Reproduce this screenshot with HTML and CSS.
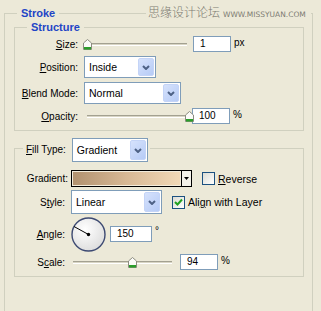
FILE: index.html
```html
<!DOCTYPE html>
<html lang="en">
<head>
    <meta charset="UTF-8">
    <title>Stroke</title>
    <link rel="stylesheet" href="styles.css">
</head>
<body>
    <div class="watermark"><span class="wm-cn">思缘设计论坛</span><span class="wm-en">WWW.MISSYUAN.COM</span></div>

    <fieldset class="group stroke">
        <legend>Stroke</legend>

        <fieldset class="group structure">
            <legend>Structure</legend>
            <div class="form structure-form">
                <label><u>S</u>ize:</label>
                <div class="line">
                    <div class="slider size-slider">
                        <div class="track"></div>
                        <svg class="thumb" style="left:0%" width="9" height="11" viewBox="0 0 9 11"><path d="M0.5 4 L4.5 0.5 L8.5 4 V10.5 H0.5 Z" fill="#fbfbf8" stroke="#8c8c80"/><rect x="1" y="8" width="7" height="2.5" fill="#2a9d2a"/></svg>
                    </div>
                    <div class="field size-field">1</div>
                    <span class="unit">px</span>
                </div>

                <label><u>P</u>osition:</label>
                <div class="line">
                    <div class="select position-select"><span>Inside</span><i class="drop"><svg width="8" height="5" viewBox="0 0 8 5"><path d="M1 1 L4 4 L7 1" fill="none" stroke="#4d6185" stroke-width="2"/></svg></i></div>
                </div>

                <label><u>B</u>lend Mode:</label>
                <div class="line">
                    <div class="select blend-select"><span>Normal</span><i class="drop"><svg width="8" height="5" viewBox="0 0 8 5"><path d="M1 1 L4 4 L7 1" fill="none" stroke="#4d6185" stroke-width="2"/></svg></i></div>
                </div>

                <label><u>O</u>pacity:</label>
                <div class="line">
                    <div class="slider opacity-slider">
                        <div class="track"></div>
                        <svg class="thumb" style="left:100%" width="9" height="11" viewBox="0 0 9 11"><path d="M0.5 4 L4.5 0.5 L8.5 4 V10.5 H0.5 Z" fill="#fbfbf8" stroke="#8c8c80"/><rect x="1" y="8" width="7" height="2.5" fill="#2a9d2a"/></svg>
                    </div>
                    <div class="field opacity-field">100</div>
                    <span class="unit">%</span>
                </div>
            </div>
        </fieldset>

        <fieldset class="group fill">
            <legend>
                <label><u>F</u>ill Type:</label>
                <div class="select filltype-select"><span>Gradient</span><i class="drop"><svg width="8" height="5" viewBox="0 0 8 5"><path d="M1 1 L4 4 L7 1" fill="none" stroke="#4d6185" stroke-width="2"/></svg></i></div>
            </legend>
            <div class="form fill-form">
                <label class="gradient-label">Gradient:</label>
                <div class="line">
                    <div class="gradient-picker">
                        <div class="gradient-swatch"></div>
                        <div class="gradient-arrow"><svg width="5" height="3" viewBox="0 0 5 3"><path d="M0 0 H5 L2.5 3 Z" fill="#000"/></svg></div>
                    </div>
                    <span class="check"></span>
                    <span class="check-text"><u>R</u>everse</span>
                </div>

                <label>S<u>t</u>yle:</label>
                <div class="line">
                    <div class="select style-select"><span>Linear</span><i class="drop"><svg width="8" height="5" viewBox="0 0 8 5"><path d="M1 1 L4 4 L7 1" fill="none" stroke="#4d6185" stroke-width="2"/></svg></i></div>
                    <span class="check checked"><svg width="11" height="11" viewBox="0 0 11 11"><path d="M2 5 L4.5 7.5 L9 2.5" fill="none" stroke="#21a121" stroke-width="2"/></svg></span>
                    <span class="check-text">Ali<u>g</u>n with Layer</span>
                </div>

                <label><u>A</u>ngle:</label>
                <div class="line">
                    <svg class="dial" width="35" height="35" viewBox="0 0 35 35">
                        <defs>
                            <radialGradient id="dialFill" cx="0.4" cy="0.35" r="0.7">
                                <stop offset="0" stop-color="#ffffff"/>
                                <stop offset="1" stop-color="#dcdcdc"/>
                            </radialGradient>
                        </defs>
                        <circle cx="17.5" cy="17.5" r="16.5" fill="url(#dialFill)" stroke="#3d4a72" stroke-width="1.4"/>
                        <line x1="17.5" y1="17.5" x2="3" y2="9.5" stroke="#000" stroke-width="1"/>
                        <circle cx="17.5" cy="17.5" r="1.7" fill="#000"/>
                    </svg>
                    <div class="field angle-field">150</div>
                    <span class="unit degree">°</span>
                </div>

                <label>S<u>c</u>ale:</label>
                <div class="line">
                    <div class="slider scale-slider">
                        <div class="track"></div>
                        <svg class="thumb" style="left:60%" width="9" height="11" viewBox="0 0 9 11"><path d="M0.5 4 L4.5 0.5 L8.5 4 V10.5 H0.5 Z" fill="#fbfbf8" stroke="#8c8c80"/><rect x="1" y="8" width="7" height="2.5" fill="#2a9d2a"/></svg>
                    </div>
                    <div class="field scale-field">94</div>
                    <span class="unit">%</span>
                </div>
            </div>
        </fieldset>
    </fieldset>
</body>
</html>
```

FILE: styles.css
```css
body {
    margin: 0;
    width: 321px;
    height: 311px;
    overflow: hidden;
    position: relative;
    background-color: #ece9d8;
    font-family: "Liberation Sans", Arial, sans-serif;
    font-size: 10px;
    color: #000;
}

/* group boxes */
.group {
    margin: 0;
    padding: 0;
    min-width: 0;
    border: 1px solid #d0d0bf;
}

.group > legend {
    font-weight: bold;
    font-size: 11px;
    line-height: 14px;
    color: #1f45c6;
    padding: 0 4px;
}

.stroke {
    margin: 6px 0 0 4px;
    width: 309px;
    height: 340px;
    box-sizing: border-box;
    padding: 0 8px 0 9px;
}

.stroke > legend {
    margin-left: 3px;
}

.structure > legend {
    margin-left: 12px;
}

.fill {
    margin-top: 7px;
}

/* legend box is shorter than the list inside it so the frame line sits a bit higher */
.fill > legend {
    display: flex;
    align-items: flex-start;
    gap: 6px;
    height: 20px;
    margin-left: 8px;
    padding: 0 2px 0 3px;
    font-weight: normal;
    font-size: 10px;
    color: #000;
}

.fill > legend label {
    line-height: 23px;
}

/* label / control grid */
.form {
    display: grid;
    align-items: center;
}

.form label {
    text-align: right;
    white-space: nowrap;
}

.structure-form {
    grid-template-columns: 63px 1fr;
    grid-template-rows: 16px 22px 22px 16px;
    column-gap: 6px;
    row-gap: 4px;
    padding: 2px 0 6px;
}

.fill-form {
    grid-template-columns: 50px 1fr;
    grid-template-rows: 17px 24px 34px 16px;
    column-gap: 6px;
    row-gap: 3px;
    padding: 12px 0 6px;
}

.gradient-label {
    margin-right: -3px;
}

.line {
    display: flex;
    align-items: center;
    height: 100%;
}

/* sliders */
.slider {
    position: relative;
    height: 11px;
}

.slider .track {
    margin-top: 4px;
    height: 1px;
    background-color: #d8d5c4;
    border-top: 1px solid #a3a191;
    border-bottom: 1px solid #fff;
}

.slider .thumb {
    position: absolute;
    top: 0;
    margin-left: -4px;
}

.size-slider {
    width: 100px;
    margin-left: 3px;
}

.opacity-slider {
    width: 102px;
    margin-left: 3px;
}

.scale-slider {
    width: 99px;
    margin-left: 2px;
}

/* text fields */
.field {
    height: 16px;
    box-sizing: border-box;
    border: 1px solid #7f9db9;
    background-color: #fff;
    padding-left: 6px;
    line-height: 14px;
}

.size-field {
    width: 38px;
    margin-left: 6px;
}

.opacity-field {
    width: 38px;
    margin-left: 3px;
}

.angle-field {
    width: 42px;
    margin-left: 4px;
}

.scale-field {
    width: 38px;
    margin-left: 8px;
}

.unit {
    align-self: flex-start;
    margin-top: 1px;
    margin-left: 3px;
}

.degree {
    margin-top: 8px;
}

/* drop-down lists */
.select {
    display: flex;
    align-items: stretch;
    height: 22px;
    box-sizing: border-box;
    border: 1px solid #7f9db9;
    background-color: #fff;
    padding: 1px;
}

.select span {
    flex: 1;
    padding-left: 3px;
    line-height: 19px;
    font-size: 10.5px;
}

.select .drop {
    width: 16px;
    display: flex;
    align-items: center;
    justify-content: center;
    background: linear-gradient(135deg, #d6e2fc, #b6cbf6);
    border: 1px solid #c4d4f7;
    border-radius: 2px;
    box-sizing: border-box;
}

.position-select {
    width: 72px;
}

.blend-select {
    width: 97px;
}

.filltype-select {
    width: 76px;
    height: 24px;
    flex-shrink: 0;
}

.filltype-select span,
.style-select span {
    line-height: 21px;
}

.style-select {
    width: 91px;
    height: 24px;
}

/* gradient picker */
.gradient-picker {
    display: flex;
    width: 121px;
    height: 17px;
    box-sizing: border-box;
    border: 1px solid #000;
}

.gradient-swatch {
    flex: 1;
    background: linear-gradient(to right, #b29270, #d7b895 50%, #f1d8b6);
    border: 1px solid #f3ecdc;
}

.gradient-arrow {
    width: 9px;
    display: flex;
    align-items: center;
    justify-content: center;
    background-color: #f4f2ea;
    border-left: 1px solid #000;
}

/* check boxes */
.check {
    width: 13px;
    height: 13px;
    box-sizing: border-box;
    border: 1px solid #1c5180;
    background: linear-gradient(135deg, #dcdcd4, #ffffff);
    margin-left: 10px;
    display: flex;
    align-items: center;
    justify-content: center;
}

.check-text {
    margin-left: 3px;
    font-size: 10.5px;
}

/* angle dial */
.dial {
    display: block;
}

/* watermark */
.watermark {
    position: absolute;
    left: 146px;
    top: 3px;
    width: 165px;
    display: flex;
    align-items: center;
    background-color: #ece9d8;
    color: #7c7b72;
    padding-left: 2px;
    box-sizing: border-box;
}

.wm-cn {
    font-family: "Noto Sans CJK SC", sans-serif;
    font-size: 12px;
    line-height: 18px;
    font-weight: 300;
}

.wm-en {
    font-family: "DejaVu Sans", sans-serif;
    font-size: 7.5px;
    margin-left: 3px;
    margin-top: 4px;
}
```
